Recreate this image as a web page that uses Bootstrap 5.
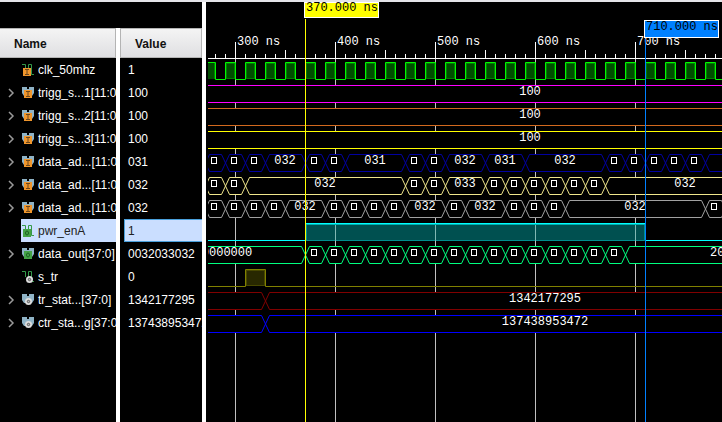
<!DOCTYPE html>
<html lang="en">
<head>
<meta charset="utf-8">
<meta name="viewport" content="width=device-width, initial-scale=1">
<title>Waveform viewer</title>
<link href="https://cdn.jsdelivr.net/npm/bootstrap@5.3.0/dist/css/bootstrap.min.css" rel="stylesheet">
<style>
body{background:#000;color:#fff;font:12px/16px "Liberation Sans",Arial,sans-serif}
.viewer{border-top:2px solid #e4e4e8}
.signals{width:206px;border-right:4px solid #fff;padding-top:26px}
.sig-table{table-layout:fixed;width:100%;height:100%;border-collapse:separate;border-spacing:0}
.sig-table td,.sig-table th{padding:0;overflow:hidden;white-space:nowrap}
.sig-table tr>:first-child{width:120px;border-right:4px solid #fff}
.sig-table th{height:30px;color:#111}
.head-box{height:30px;line-height:30px;background:linear-gradient(#f4f4f4,#dfdfe2);border:1px solid #b4b4b4;border-left-width:0;padding-left:14px}
th+th .head-box{border-left-width:1px}
.sig-table tbody td{height:23px}
.sig-row{height:23px}
.expander{width:21px;height:23px;padding:0 0 0 8px;border:0;background:none;line-height:0;flex:none;text-align:left}
.sig-name{height:23px;padding-left:1px;gap:4px;min-width:0;overflow:hidden}
.sig-name svg{flex:none}
.sig-value{height:23px;margin-left:4px;border:1px solid transparent;border-right:0;padding-left:3px}
.sig-name span,.sig-value{padding-top:1px}
.picked .sig-name,.picked .sig-value{background:#cadeff;color:#222}
.picked .sig-value{border-color:#4aa0dc}
.waves{min-width:0}
.waves text{font:12px "Liberation Mono","Courier New",monospace;fill:#fff}
.waves .tag-text{fill:#000}
</style>
<script src="https://cdn.jsdelivr.net/npm/bootstrap@5.3.0/dist/js/bootstrap.bundle.min.js"></script>
</head>
<body>
<svg width="0" height="0" class="position-absolute" aria-hidden="true">
  <defs>
    <symbol id="wire" viewBox="0 0 12 12"><path d="M0 .5h3.500V6M6.500 6V.5h3v10H12" fill="none" stroke="#35994a"/></symbol>
    <symbol id="bundle" viewBox="0 0 12 12"><path d="M0 0h5v2h2V0h5v6l-2 3H2L0 6z" fill="#8fb3c6"/></symbol>
    <symbol id="in" viewBox="0 0 12 12"><path d="M2 3h8v8H2z" fill="#f0962c"/><path d="M4 4.500h4M6 5v4M4 9.500h4" stroke="#6b471c" fill="none"/></symbol>
    <symbol id="out" viewBox="0 0 12 12"><path d="M2 3h8v8H2z" fill="#45a347"/><ellipse cx="6" cy="7" rx="1.500" ry="2" stroke="#1c5f24" fill="none"/></symbol>
    <symbol id="net" viewBox="0 0 12 12"><circle cx="6.500" cy="7.500" r="3.500" fill="#ddd"/><circle cx="6.500" cy="7.500" r="1.200" fill="#bbb" stroke="#555"/></symbol>
  </defs>
</svg>
<main class="viewer d-flex vh-100 overflow-hidden">
  <section class="signals flex-shrink-0" aria-label="Signals">
    <table class="sig-table">
      <thead><tr><th scope="col"><div class="head-box">Name</div></th><th scope="col"><div class="head-box">Value</div></th></tr></thead>
      <tbody id="signals"></tbody>
    </table>
  </section>
  <section class="waves flex-grow-1 overflow-hidden" aria-label="Waveforms">
    <svg id="plot" class="d-block" width="100%" height="100%"></svg>
  </section>
</main>
<script>
const signals = [
  ['clk_50mhz','1','wire','in'],
  ['trigg_s...1[11:0]','100','bundle','in'],
  ['trigg_s...2[11:0]','100','bundle','in'],
  ['trigg_s...3[11:0]','100','bundle','in'],
  ['data_ad...[11:0]','031','bundle','in'],
  ['data_ad...[11:0]','032','bundle','in'],
  ['data_ad...[11:0]','032','bundle','in'],
  ['pwr_enA','1','wire','out',true],
  ['data_out[37:0]','0032033032','bundle','out'],
  ['s_tr','0','wire','net'],
  ['tr_stat...[37:0]','1342177295','bundle','net'],
  ['ctr_sta...g[37:0]','137438953472','bundle','net']
];
// the badge of a single wire sits lower than the badge of a bundle
const badge = (base,kind) => base==='bundle' ? `<use href="#${kind}" width="12" height="12"/>` :
  kind==='net' ? '<use href="#net" x="1" y="1" width="12" height="12"/>' : `<use href="#${kind}" x="-1" y="1" width="12" height="12"/>`;
document.getElementById('signals').innerHTML = signals.map(([name,value,base,kind,picked]) =>
  `<tr class="${picked?'picked':''}"><td><div class="sig-row d-flex">` +
  (base==='bundle' ? `<button type="button" class="expander" aria-label="Expand ${name}"><svg width="7" height="10" viewBox="0 0 7 10"><path d="M1 1l4 4-4 4" fill="none" stroke="#999" stroke-width="1.5"/></svg></button>` : '<span class="expander"></span>') +
  `<div class="sig-name d-flex align-items-center flex-grow-1"><svg width="12" height="12"><use href="#${base}" width="12" height="12"/>${badge(base,kind)}</svg><span>${name}</span></div></div></td>` +
  `<td><div class="sig-value d-flex align-items-center">${value}</div></td></tr>`).join('') + '<tr aria-hidden="true"><td class="h-100"></td><td></td></tr>';

const END = 4000, LEFT = 208;
let out = '';
const line = (x1,y1,x2,y2,c) => out += `<path d="M${x1} ${y1}L${x2} ${y2}" stroke="${c}"/>`;
const rect = (x,y,w,h,c) => out += `<rect x="${x}" y="${y}" width="${w}" height="${h}" fill="${c}"/>`;
const text = (x,y,s,a='start',cls='') => out += `<text x="${x}" y="${y}" text-anchor="${a}" class="${cls}">${s}</text>`;

// grid and time ruler, one pixel per nanosecond
for (let x=235,t=300; x<END; x+=100,t+=100) {
  line(x+.5,59,x+.5,END,'#c0c0c0');
  line(x+.5,42,x+.5,59,'#fff');
  text(x+2,45,t+' ns');
}
for (let x=215; x<END; x+=10) line(x+.5,(x-235)%50===0?50:54,x+.5,58,'#fff');
line(LEFT,58.5,END,58.5,'#fff');

// clock
let clock = `M${LEFT} 62.5H215.500V79.500`;
rect(LEFT,63,7,16,'#004c00');
line(214.5,63,214.5,79,'#008000');
for (let x=225; x<END; x+=20) {
  out += `<rect x="${x+1.5}" y="63.5" width="8" height="15" fill="#004c00" stroke="#008000"/>`;
  clock += `H${x+.5}V62.5H${x+10.5}V79.5`;
}
out += `<path d="${clock}" fill="none" stroke="#00f800"/>`;

// bus: edges are the transition positions, labels are read cell by cell ("*" is a value too wide to print)
function bus(top,color,edges,labels,centers={}) {
  const y1=top+.5, y2=top+17.5;
  rect(LEFT,top,END,18,'#000');
  const pts=[LEFT-30,...edges,END];
  for (let i=0;i<pts.length-1;i++) {
    const a=pts[i]+.5, b=pts[i+1]+.5, label=labels[i]||'';
    out += `<path d="M${a} ${top+9}L${a+4} ${y1}H${b-4}L${b} ${top+9}L${b-4} ${y2}H${a+4}Z" fill="none" stroke="${color}"/>`;
    const mid=centers[i]||(pts[i]+pts[i+1])/2;
    if (label==='*') out += `<rect x="${mid-3.5}" y="${top+3.5}" width="5" height="6" fill="none" stroke="#fff"/>`;
    else if (label) text(mid,top+10,label,'middle');
  }
}
bus(85,'#f0f',[],['100'],{0:530});
bus(108,'#d2691e',[],['100'],{0:530});
bus(131,'#ff0',[],['100'],{0:530});
bus(154,'#0000a0',[205,225,245,265,305,325,345,405,425,445,485,525,605,625,645,665,685,705],
  ['','*','*','*','032','*','*','031','*','*','032','031','032','*','*','*','*','*','']);
bus(177,'#f0e68c',[205,225,245,405,425,445,485,505,525,545,565,585,605],
  ['','*','*','032','*','*','033','*','*','*','*','*','*','032'],{13:685});
bus(200,'#a0a0a0',[205,225,245,265,285,325,345,365,385,405,445,465,505,525,545,565,705,725],
  ['','*','*','*','*','032','*','*','*','*','032','*','032','*','*','*','032','*','']);
const burst=[]; for (let x=305;x<=625;x+=20) burst.push(x);
bus(246,'#00ff80',burst,['0000000',...Array(16).fill('*'),'2032033032'],{0:227,17:746});
bus(292,'#800000',[265],['','1342177295'],{1:545});
bus(315,'#00f',[265],['','137438953472'],{1:545});

// power enable
rect(306,224,339,17,'#005050');
out += '<path d="M306 224.5H644.500V240.500H306.500V224" fill="none" stroke="#009090"/>';
for (let x=335;x<645;x+=100) line(x+.5,224,x+.5,241,'#80b8b4');
line(306,224.5,645,224.5,'#00b0b0');
out += `<path d="M${LEFT} 240.500H305.500V223.500H645.500V240.500H${END}" fill="none" stroke="#0ff"/>`;
// trigger pulse
out += '<rect x="246.500" y="270.500" width="18" height="15" fill="#282800" stroke="#484800"/>';
out += `<path d="M${LEFT} 286.500H245.500V269.500H265.500V286.500H${END}" fill="none" stroke="#808000"/>`;

// cursors
line(305.5,19,305.5,END,'#ff0');
line(645.5,39,645.5,END,'#0080ff');
out += '<rect x="304.500" y="2.500" width="74" height="15" fill="#ff0" stroke="#fff"/><rect x="644.500" y="20.500" width="74" height="17" fill="#0080ff" stroke="#fff"/>';
text(306,11,'370.000 ns','start','tag-text');
text(646,30,'710.000 ns','start','tag-text');

document.getElementById('plot').innerHTML =
  `<defs><clipPath id="area"><rect x="${LEFT}" y="0" width="${END}" height="${END}"/></clipPath></defs>` +
  `<g transform="translate(-206 -2)"><g clip-path="url(#area)">${out}</g></g>`;
</script>
</body>
</html>
